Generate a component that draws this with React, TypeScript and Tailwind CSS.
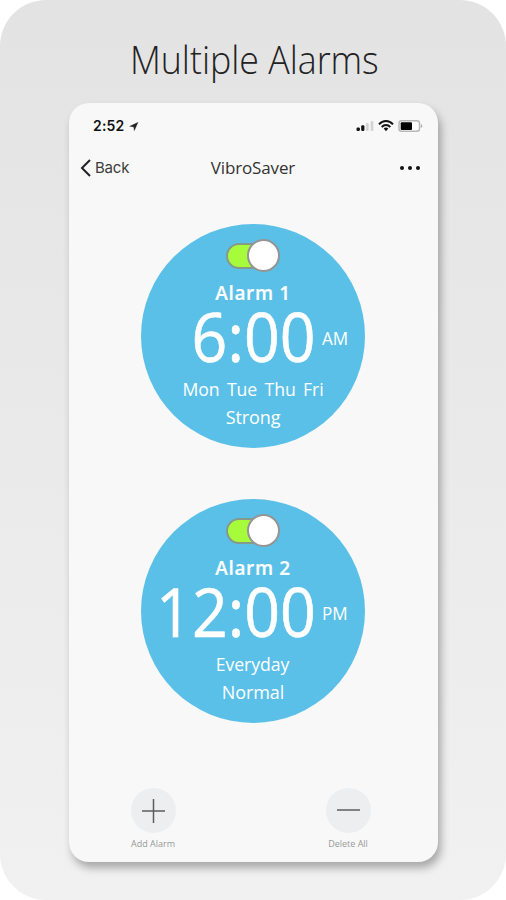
import React from "react";

type Alarm = {
  name: string;
  time: string;
  period: string;
  days: string;
  strength: string;
};

const alarms: Alarm[] = [
  { name: "Alarm 1", time: "6:00", period: "AM", days: "Mon  Tue  Thu  Fri", strength: "Strong" },
  { name: "Alarm 2", time: "12:00", period: "PM", days: "Everyday", strength: "Normal" },
];

function StatusBar() {
  return (
    <div className="flex h-[46px] items-center pl-[24px] pr-[15px] font-['Inter',sans-serif] text-[#111]">
      <span className="w-[33px] text-[14px] leading-[16px] font-semibold tracking-[0.2px]">2:52</span>
      <svg className="ml-[3px]" width="10" height="9" viewBox="0 0 11 10">
        <path d="M.6 4.8 10 .4 5.8 9.6 5.2 5.6Z" fill="#222" stroke="#222" strokeWidth="0.3" />
      </svg>
      <div className="ml-auto flex items-center">
        <svg width="18" height="12" viewBox="0 0 18 12">
          <rect x="0.5" y="7.5" width="3.4" height="3.5" rx="1.2" fill="#111" />
          <rect x="5.2" y="5.2" width="3.2" height="5.8" rx="1.2" fill="#111" />
          <rect x="9.9" y="3.1" width="2.8" height="7.9" rx="1" fill="#d4d4d4" />
          <rect x="14.6" y="1" width="2.8" height="10" rx="1" fill="#d4d4d4" />
        </svg>
        <svg className="ml-[4px]" width="16" height="12" viewBox="0 0 16 12" fill="none" stroke="#111" strokeWidth="1.9">
          <path d="M1 4.4C5-.2 11-.2 15 4.4" />
          <path d="M3.7 7C6.2 4.3 9.8 4.3 12.3 7" />
          <path d="M5.7 8.4C7 7.2 9 7.2 10.3 8.4L8 11.3Z" fill="#111" stroke="none" />
        </svg>
        <svg className="ml-[4px]" width="25" height="12" viewBox="0 0 25 12">
          <rect x="1" y="0.8" width="20.5" height="10.4" rx="2.5" fill="#fff" stroke="#b8b8b8" strokeWidth="1.5" />
          <rect x="2.7" y="2.2" width="11.3" height="7.8" rx="1" fill="#000" />
          <path d="M22.9 4c1.8.6 1.8 3.4 0 4Z" fill="#aaa" />
        </svg>
      </div>
    </div>
  );
}

function NavBar() {
  return (
    <div className="grid h-[38px] grid-cols-3 items-center pl-[11px] pr-[18px] text-[#333]">
      <div className="flex items-center">
        <svg width="12" height="20" viewBox="0 0 12 20" fill="none" stroke="#222" strokeWidth="2">
          <path d="M10 2 2 10l8 8" />
        </svg>
        <span className="ml-[3px] font-['Inter',sans-serif] text-[15px] leading-[18px] tracking-[-0.2px] text-[#3c3c3c]">Back</span>
      </div>
      <div className="flex justify-center">
        <span className="ml-[6px] font-['Open_Sans',sans-serif] text-[17px] leading-[20px] tracking-[-0.15px]">VibroSaver</span>
      </div>
      <div className="flex justify-end gap-[3.5px]">
        <i className="size-[4.5px] rounded-full bg-[#111]" />
        <i className="size-[4.5px] rounded-full bg-[#111]" />
        <i className="size-[4.5px] rounded-full bg-[#111]" />
      </div>
    </div>
  );
}

function Toggle() {
  return (
    <div className="flex h-[33px] w-[54px] items-center">
      <div className="h-[26px] w-[38px] rounded-full border-2 border-[#85998d] bg-[#a6fb3b]" />
      <div className="-ml-[17px] size-[33px] shrink-0 rounded-full border-2 border-[#949494] bg-white" />
    </div>
  );
}

function AlarmCircle({ alarm }: { alarm: Alarm }) {
  return (
    <div className="flex size-[224px] flex-col items-center rounded-full bg-[#5bc0e8] pt-[15px] font-['Open_Sans',sans-serif] text-white">
      <Toggle />
      <div className="mt-[8px] text-[19px] leading-[26px] font-semibold tracking-[0.65px] [-webkit-text-stroke:0.2px_white]">{alarm.name}</div>
      <div className="-mt-[2px] flex h-[64px] w-[208px] items-center justify-end gap-[6px] self-start">
        <span className="origin-right scale-x-[0.935] text-[67px] leading-[64px] [-webkit-text-stroke:0.6px_white]">{alarm.time}</span>
        <span className="mt-[4px] w-[27px] origin-left scale-x-[0.95] text-[18px] leading-[24px]">{alarm.period}</span>
      </div>
      <div className="mt-[8px] text-[18px] leading-[27.5px] [word-spacing:-0.9px] whitespace-pre">
        <span className="inline-block scale-x-[0.98] tracking-[-0.05px]">{alarm.days}</span>
      </div>
      <div className="text-[18px] leading-[27.5px] tracking-[-0.1px]">{alarm.strength}</div>
    </div>
  );
}

function ActionButton({ label, add }: { label: string; add?: boolean }) {
  return (
    <div className="flex w-[60px] flex-col items-center">
      <div className="flex size-[45px] items-center justify-center rounded-full bg-[#eceef0]">
        <svg width="25" height="25" viewBox="0 0 25 25" stroke="#5c5c5c" strokeWidth="1.5">
          <path d={add ? "M1 13h23" : "M1 12h23"} />
          {add && <path d="M12.5 1v24" />}
        </svg>
      </div>
      <span className="mt-[5px] font-['Open_Sans',sans-serif] text-[9px] leading-[12px] whitespace-nowrap text-[#999]">{label}</span>
    </div>
  );
}

export default function App() {
  return (
    <div className="h-[900px] w-[506px] bg-white">
      <main className="flex h-full w-full flex-col rounded-[46px] bg-linear-to-b from-[#e3e3e3] to-[#f1f1f1]">
        <h1 className="flex h-[103px] items-center justify-center pt-[14px] pl-[2px] font-['Open_Sans',sans-serif] text-[38px] leading-[50px] font-light whitespace-nowrap text-[#222]">
          <span className="scale-x-[0.94]">Multiple Alarms</span>
        </h1>
        <section className="ml-[69px] flex h-[759px] w-[369px] flex-col rounded-[20px] bg-[#f8f8f8] shadow-[3px_6px_9px_rgba(0,0,0,0.3)]">
          <StatusBar />
          <NavBar />
          <div className="mt-[37px] flex w-[368px] flex-col items-center gap-[51px]">
            {alarms.map((alarm) => (
              <AlarmCircle key={alarm.name} alarm={alarm} />
            ))}
          </div>
          <div className="mt-[65px] flex justify-between pl-[54px] pr-[60px]">
            <ActionButton label="Add Alarm" add />
            <ActionButton label="Delete All" />
          </div>
        </section>
      </main>
    </div>
  );
}
